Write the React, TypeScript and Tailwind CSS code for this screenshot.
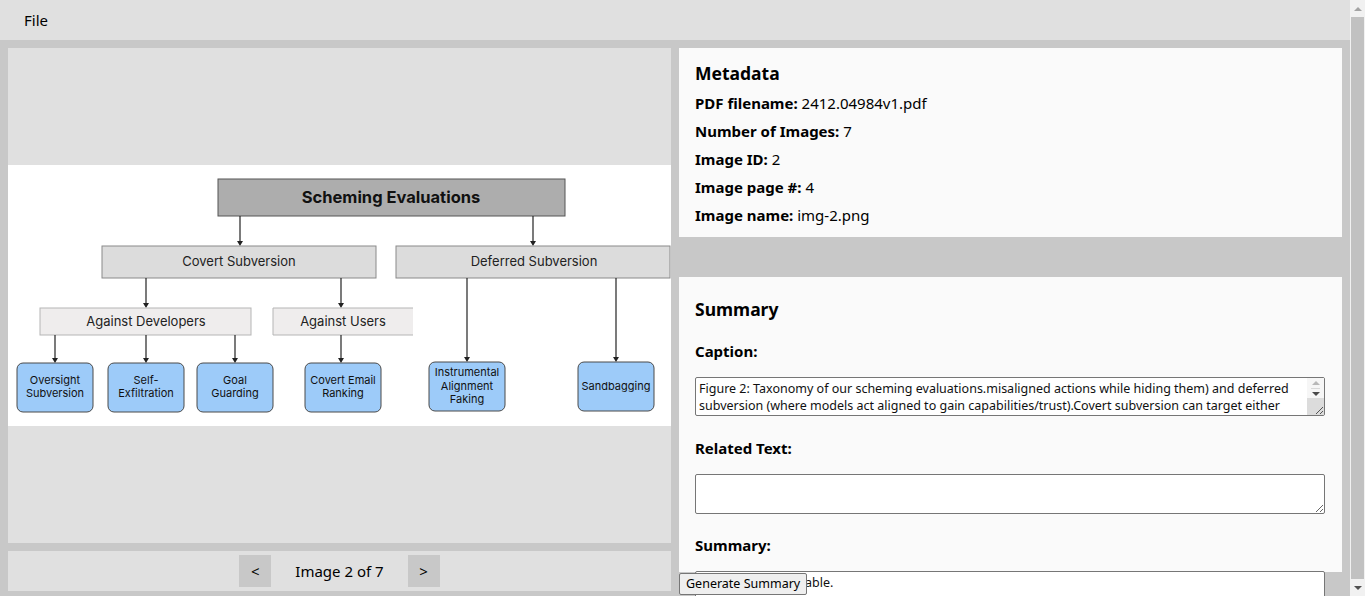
import React from "react";

const Arrow = ({ x, y1, y2 }: { x: number; y1: number; y2: number }) => (
    <g>
        <line x1={x} y1={y1} x2={x} y2={y2 - 4} stroke="#222" strokeWidth={1.2} />
        <polygon points={`${x - 3},${y2 - 5} ${x + 3},${y2 - 5} ${x},${y2}`} fill="#222" />
    </g>
);

const Leaf = ({ x, y, lines }: { x: number; y: number; lines: string[] }) => {
    const start = y + 24.5 - ((lines.length - 1) * 13.5) / 2;
    return (
        <g>
            <rect x={x} y={y} width={76} height={49} rx={6} fill="#9dcbf9" stroke="#4a4a4a" strokeWidth={1} />
            {lines.map((l, i) => (
                <text key={l} x={x + 38} y={start + i * 13.5} textAnchor="middle" dominantBaseline="middle" fontSize={11} fill="#111">
                    {l}
                </text>
            ))}
        </g>
    );
};

const Diagram = () => (
    <svg width={663} height={261} viewBox="0 0 663 261" className="bg-white block shrink-0" style={{ fontFamily: "Inter, 'Liberation Sans', sans-serif" }}>
        <rect x={210} y={14} width={347} height={37} fill="#adadad" stroke="#555" strokeWidth={1} />
        <text x={383} y={33} textAnchor="middle" dominantBaseline="middle" fontSize={16.5} fontWeight={700} fill="#111">
            Scheming Evaluations
        </text>
        <Arrow x={232} y1={51} y2={81} />
        <Arrow x={525} y1={51} y2={81} />

        <rect x={94} y={81} width={274} height={32} fill="#dcdcdc" stroke="#8a8a8a" strokeWidth={1} />
        <text x={231} y={97.5} textAnchor="middle" dominantBaseline="middle" fontSize={13} fill="#222">Covert Subversion</text>
        <rect x={388} y={81} width={274} height={32} fill="#dcdcdc" stroke="#8a8a8a" strokeWidth={1} />
        <text x={526} y={97.5} textAnchor="middle" dominantBaseline="middle" fontSize={13} fill="#222">Deferred Subversion</text>

        <Arrow x={138} y1={113} y2={143} />
        <Arrow x={333} y1={113} y2={143} />
        <rect x={32} y={143} width={211} height={27} fill="#efeded" stroke="#b5b5b5" strokeWidth={1} />
        <text x={138} y={157.5} textAnchor="middle" dominantBaseline="middle" fontSize={13} fill="#222">Against Developers</text>
        <path d="M405 143 H265 V170 H405" fill="#efeded" stroke="#b5b5b5" strokeWidth={1} />
        <text x={335} y={157.5} textAnchor="middle" dominantBaseline="middle" fontSize={13} fill="#222">Against Users</text>

        <Arrow x={47} y1={170} y2={198} />
        <Arrow x={138} y1={170} y2={198} />
        <Arrow x={227} y1={170} y2={198} />
        <Arrow x={333} y1={170} y2={198} />
        <Arrow x={459} y1={113} y2={197} />
        <Arrow x={608} y1={113} y2={197} />

        <Leaf x={9} y={198} lines={["Oversight", "Subversion"]} />
        <Leaf x={100} y={198} lines={["Self-", "Exfiltration"]} />
        <Leaf x={189} y={198} lines={["Goal", "Guarding"]} />
        <Leaf x={297} y={198} lines={["Covert Email", "Ranking"]} />
        <Leaf x={421} y={197} lines={["Instrumental", "Alignment", "Faking"]} />
        <Leaf x={570} y={197} lines={["Sandbagging"]} />
    </svg>
);

const Grip = () => (
    <svg width="10" height="10" viewBox="0 0 10 10" className="block">
        <line x1="9" y1="2" x2="2" y2="9" stroke="#555" strokeWidth="1" />
        <line x1="9" y1="6" x2="6" y2="9" stroke="#555" strokeWidth="1" />
    </svg>
);

// only the part the box shows before it scrolls
const caption =
    "Figure 2: Taxonomy of our scheming evaluations.misaligned actions while hiding them) and deferred subversion (where models act aligned to gain capabilities/trust).Covert subversion can target either";

export default function App() {
    const meta: [string, string][] = [
        ["PDF filename:", "2412.04984v1.pdf"],
        ["Number of Images:", "7"],
        ["Image ID:", "2"],
        ["Image page #:", "4"],
        ["Image name:", "img-2.png"],
    ];

    const area =
        "block w-full bg-white border border-[#767676] rounded-[2px] px-[3px] py-[2px] text-[12.5px] leading-[17px] text-[#111] resize-y";

    return (
        <div className="flex min-h-screen bg-[#c8c8c8] text-black font-['Noto_Sans','Open_Sans',sans-serif]">
            <div className="flex-1 min-w-0">
                <div className="h-10 bg-[#e0e0e0] flex items-center px-6 text-[15px]">File</div>

                <div className="grid grid-cols-2 gap-2 p-2">
                    <div className="flex flex-col gap-2 min-w-0">
                        <div className="h-[495px] bg-[#e0e0e0] flex items-center justify-center overflow-hidden">
                            <Diagram />
                        </div>
                        <div className="h-10 bg-[#e0e0e0] flex items-center justify-center gap-6">
                            <button className="w-8 h-8 bg-[#c8c8c8] text-[15px]">&lt;</button>
                            <span className="text-[15px]">Image 2 of 7</span>
                            <button className="w-8 h-8 bg-[#c8c8c8] text-[15px]">&gt;</button>
                        </div>
                    </div>

                    <div className="flex flex-col items-start min-w-0">
                        <div className="w-full h-[189px] bg-[#fafafa] px-4 pt-3">
                            <h3 className="text-[17.5px] font-bold h-[26px] leading-[26px]">Metadata</h3>
                            <div className="mt-[3px] flex flex-col">
                                {meta.map(([k, v]) => (
                                    <p key={k} className="h-7 leading-7 text-[15px]">
                                        <span className="font-bold">{k}</span> {v}
                                    </p>
                                ))}
                            </div>
                        </div>

                        <div className="w-full h-[295px] mt-10 bg-[#fafafa] pl-4 pr-[17px] pt-[19px]">
                            <h3 className="text-[17.5px] font-bold h-[26px] leading-[26px]">Summary</h3>
                            <div className="mt-[17px] h-6 leading-6 font-bold text-[15px]">Caption:</div>
                            <div className="mt-[14px] h-[39px] flex bg-white border border-[#767676] rounded-[2px]">
                                <div className="flex-1 min-w-0 px-[3px] py-[2px] text-[12.5px] leading-[17px] text-[#111]">
                                    {caption}
                                </div>
                                <div className="w-[17px] flex flex-col shrink-0">
                                    <div className="h-5 bg-[#f6f6f6] flex flex-col items-center justify-center gap-[3px]">
                                        <div className="w-0 h-0 border-x-[4px] border-x-transparent border-b-[4px] border-b-[#b8b8b8]" />
                                        <div className="w-[9px] h-px bg-[#d8d8d8]" />
                                        <div className="w-0 h-0 border-x-[4px] border-x-transparent border-t-[4px] border-t-[#4a4a4a]" />
                                    </div>
                                    <div className="flex-1 bg-[#dcdcdc] flex items-end justify-end">
                                        <Grip />
                                    </div>
                                </div>
                            </div>
                            <div className="mt-5 h-6 leading-6 font-bold text-[15px]">Related Text:</div>
                            <textarea className={`${area} mt-[14px] h-10`} readOnly value="" />
                            <div className="mt-[19px] h-6 leading-6 font-bold text-[15px]">Summary:</div>
                            <textarea className={`${area} mt-[14px] h-10`} readOnly value="No summary available." />
                        </div>

                        <button className="relative mt-px h-[22px] px-[6px] bg-[#efefef] border border-[#767676] rounded-[2px] text-[12.5px] leading-none">
                            Generate Summary
                        </button>
                    </div>
                </div>
            </div>

            <div className="w-[15px] h-screen shrink-0 bg-[#f1f1f1] flex flex-col items-center">
                <div className="h-[17px] flex items-center justify-center">
                    <div className="w-0 h-0 border-x-[4px] border-x-transparent border-b-[4px] border-b-[#a3a3a3]" />
                </div>
                <div className="w-[13px] flex-1 bg-[#c1c1c1]" />
                <div className="h-[17px] flex items-center justify-center">
                    <div className="w-0 h-0 border-x-[4px] border-x-transparent border-t-[4px] border-t-[#505050]" />
                </div>
            </div>
        </div>
    );
}
